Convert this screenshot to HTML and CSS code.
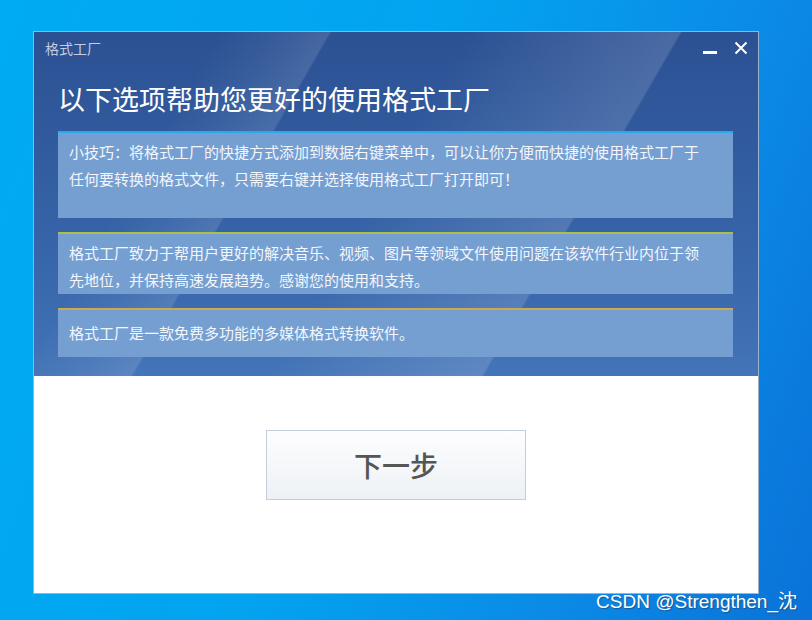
FILE: index.html
```html
<!DOCTYPE html>
<html lang="zh-CN">
<head>
    <meta charset="UTF-8">
    <meta name="viewport" content="width=device-width, initial-scale=1.0">
    <title>格式工厂</title>
    <link rel="stylesheet" href="styles.css">
</head>
<body>
    <div class="desktop">
        <div class="window">
            <div class="panel">
                <div class="titlebar">
                    <span class="app-name">格式工厂</span>
                    <div class="controls">
                        <svg class="ctrl" width="14" height="14" viewBox="0 0 14 14">
                            <rect x="0" y="10" width="14" height="3" fill="#ffffff"/>
                        </svg>
                        <svg class="ctrl" width="14" height="14" viewBox="0 0 14 14">
                            <path d="M1.5 1.5 L12.5 12.5 M12.5 1.5 L1.5 12.5" stroke="#ffffff" stroke-width="2" fill="none"/>
                        </svg>
                    </div>
                </div>
                <div class="panel-body">
                    <h1>以下选项帮助您更好的使用格式工厂</h1>
                    <div class="tips">
                        <div class="tip tip-blue tip-tall">小技巧：将格式工厂的快捷方式添加到数据右键菜单中，可以让你方便而快捷的使用格式工厂于任何要转换的格式文件，只需要右键并选择使用格式工厂打开即可！</div>
                        <div class="tip tip-green">格式工厂致力于帮用户更好的解决音乐、视频、图片等领域文件使用问题在该软件行业内位于领先地位，并保持高速发展趋势。感谢您的使用和支持。</div>
                        <div class="tip tip-gold tip-single">格式工厂是一款免费多功能的多媒体格式转换软件。</div>
                    </div>
                </div>
            </div>
            <div class="footer">
                <button class="next-btn" type="button">下一步</button>
            </div>
        </div>
        <div class="watermark">CSDN @Strengthen_沈</div>
    </div>
</body>
</html>
```

FILE: styles.css
```css
body {
    margin: 0;
    padding: 0;
    font-family: "Noto Sans CJK SC", "Noto Sans", sans-serif;
}

/* desktop wallpaper around the window */
.desktop {
    position: relative;
    width: 812px;
    height: 620px;
    box-sizing: border-box;
    padding: 31px 0 0 33px;
    background: linear-gradient(110deg, #00abf3 0%, #03a3f0 45%, #0b8ae6 75%, #0a72d8 100%);
    overflow: hidden;
}

.window {
    width: 726px;
    height: 563px;
    box-sizing: border-box;
    border: 1px solid #9fb2cb;
    display: flex;
    flex-direction: column;
    background-color: #ffffff;
}

/* blue upper part with the light streaks */
.panel {
    background-image:
        linear-gradient(120deg,
            rgba(255, 255, 255, 0) 20%,
            rgba(255, 255, 255, 0.05) 26%,
            rgba(255, 255, 255, 0.12) 32%,
            rgba(255, 255, 255, 0) 32.3%,
            rgba(255, 255, 255, 0) 47%,
            rgba(255, 255, 255, 0.06) 56%,
            rgba(255, 255, 255, 0.14) 70%,
            rgba(255, 255, 255, 0) 70.3%),
        linear-gradient(to bottom, #2c5193 0%, #325da1 40%, #3a69ad 75%, #4475b8 100%);
}

.titlebar {
    height: 32px;
    display: flex;
    align-items: center;
    justify-content: space-between;
    padding: 0 10px 0 11px;
}

.app-name {
    font-size: 14px;
    color: #c4cee0;
}

.controls {
    display: flex;
    align-items: center;
    gap: 17px;
}

.ctrl {
    display: block;
}

.panel-body {
    padding: 16px 25px 19px 24px;
}

h1 {
    margin: 0 0 14px 0;
    font-size: 27px;
    line-height: 37px;
    font-weight: normal;
    color: #ffffff;
}

.tips {
    display: flex;
    flex-direction: column;
    gap: 14px;
}

.tip {
    background-color: #769fd1;
    border-top: 2px solid #2aa9e9;
    padding: 5px 24px 1px 11px;
    font-size: 15px;
    line-height: 27px;
    color: #f3f6fb;
}

.tip-blue {
    border-top-color: #29a9ea;
}

.tip-green {
    border-top-color: #a9c04a;
}

.tip-gold {
    border-top-color: #d2a64a;
}

.tip-tall {
    height: 87px;
    box-sizing: border-box;
}

.tip-single {
    padding-top: 9px;
    padding-bottom: 11px;
}

/* white lower part */
.footer {
    flex: 1;
    display: flex;
    justify-content: center;
    align-items: flex-start;
    padding-top: 54px;
    background-color: #ffffff;
}

.next-btn {
    width: 260px;
    height: 70px;
    border: 1px solid #c2cedc;
    background: linear-gradient(to bottom, #fdfdfe 0%, #f4f6f9 60%, #edf1f5 100%);
    font-family: "Noto Sans CJK SC", sans-serif;
    font-size: 28px;
    font-weight: 500;
    color: #555555;
    padding: 0;
    cursor: pointer;
}

.watermark {
    position: absolute;
    top: 586px;
    right: 15px;
    font-family: "Liberation Sans", "Noto Sans CJK SC", sans-serif;
    font-size: 19px;
    color: #ffffff;
    text-shadow: 1px 1px 1px rgba(40, 60, 90, 0.6);
}
```
